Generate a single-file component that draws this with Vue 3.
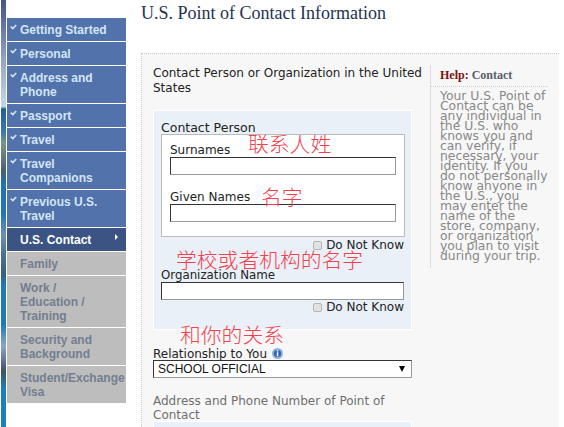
<template>
  <div class="page">
    <div class="strip"></div>
    <ul class="nav">
      <li
        v-for="item in navItems"
        :key="item.label"
        class="nav__item"
        :class="['nav__item--' + item.state]"
      >
        <svg v-if="item.state === 'done'" class="nav__check" width="7" height="6" viewBox="0 0 7 6">
          <path d="M.8 2.6 2.8 4.6 6.2 1" fill="none" stroke="#d6e6f5" stroke-width="1.6" />
        </svg>
        <svg v-if="item.state === 'active'" class="nav__arrow" width="3" height="6" viewBox="0 0 3 6">
          <path d="M0 0 3 3 0 6z" fill="#fff" />
        </svg>
        <span v-html="item.label"></span>
      </li>
    </ul>

    <main class="main">
      <h1 class="title">U.S. Point of Contact Information</h1>
      <div class="panel">
        <div class="form">
          <div class="form__heading">Contact Person or Organization in the United States</div>
          <div class="group">
            <div class="group__label">Contact Person</div>
            <div class="person">
              <label class="field-label">Surnames</label>
              <input class="text" type="text" />
              <label class="field-label field-label--given">Given Names</label>
              <input class="text" type="text" />
            </div>
            <div class="dnk"><input type="checkbox" class="check" /><span>Do Not Know</span></div>
            <label class="org-label">Organization Name</label>
            <input class="text text--org" type="text" />
            <div class="dnk dnk--org"><input type="checkbox" class="check" /><span>Do Not Know</span></div>
          </div>
          <div class="rel-label">
            <span>Relationship to You</span>
            <svg class="info" width="11" height="11" viewBox="0 0 11 11">
              <circle cx="5.5" cy="5.5" r="5.5" fill="#8fb0dc" />
              <circle cx="5.5" cy="5.5" r="3.6" fill="#2f62b4" />
              <rect x="4.8" y="2.2" width="1.5" height="1.4" fill="#fff" />
              <rect x="4.8" y="4.2" width="1.5" height="4.2" fill="#fff" />
            </svg>
          </div>
          <div class="select">
            <span>SCHOOL OFFICIAL</span>
            <i class="select__arrow"></i>
          </div>
          <div class="address">Address and Phone Number of Point of Contact</div>
          <div class="group group--tail"></div>
        </div>

        <aside class="help">
          <div class="help__title"><b>Help:</b> Contact</div>
          <p class="help__text">
            <span v-for="line in helpLines" :key="line" class="help__line">{{ line }}</span>
          </p>
        </aside>
      </div>
    </main>

    <span
      v-for="note in notes"
      :key="note.text"
      class="note"
      :style="{ left: note.x + 'px', top: note.y + 'px' }"
    >{{ note.text }}</span>
  </div>
</template>

<script setup>
const navItems = [
  { label: 'Getting Started', state: 'done' },
  { label: 'Personal', state: 'done' },
  { label: 'Address and<br>Phone', state: 'done' },
  { label: 'Passport', state: 'done' },
  { label: 'Travel', state: 'done' },
  { label: 'Travel<br>Companions', state: 'done' },
  { label: 'Previous U.S.<br>Travel', state: 'done' },
  { label: 'U.S. Contact', state: 'active' },
  { label: 'Family', state: 'todo' },
  { label: 'Work /<br>Education /<br>Training', state: 'todo' },
  { label: 'Security and<br>Background', state: 'todo' },
  { label: 'Student/Exchange<br>Visa', state: 'todo' }
]

const helpLines = [
  'Your U.S. Point of',
  'Contact can be',
  'any individual in',
  'the U.S. who',
  'knows you and',
  'can verify, if',
  'necessary, your',
  'identity. If you',
  'do not personally',
  'know anyone in',
  'the U.S., you',
  'may enter the',
  'name of the',
  'store, company,',
  'or organization',
  'you plan to visit',
  'during your trip.'
]

// handwritten annotations lying over the form
const notes = [
  { text: '联系人姓', x: 248, y: 130 },
  { text: '名字', x: 261, y: 183 },
  { text: '学校或者机构的名字', x: 176, y: 246 },
  { text: '和你的关系', x: 180, y: 321 }
]
</script>

<style>
html, body { margin: 0; background: #fff; }
</style>

<style scoped>
.page {
  position: relative;
  display: flex;
  width: 564px;
  height: 427px;
  overflow: hidden;
  background: #fff;
  font-family: "DejaVu Sans", Verdana, sans-serif;
}
.strip {
  flex: 0 0 5px;
  margin: 0 1px;
  background: linear-gradient(180deg, #47558f 0, #5f6f9f 5%, #93a5c0 14%, #c3d3e2 24%, #c3d3e2 25%, #1f5f96 25.5%, #3b7aa8 31%, #76997f 33.5%, #5d6f78 38%, #49606f 40%, #1f74b0 43%, #1d76b4 50%, #6f8fb0 55%, #49708f 60%, #3a5f78 64%, #1c7ab8 67%, #1c7ab8 76%, #8ea4c8 81%, #5a6c88 85%, #3e5366 87%, #1b7fbe 91%, #1b7fbe 100%);
}
.nav {
  flex: 0 0 119px;
  margin: 18px 0 0;
  padding: 0;
  list-style: none;
  align-self: flex-start;
}
.nav__item {
  position: relative;
  box-sizing: border-box;
  padding: 5px 0 4px 13px;
  border-bottom: 1px solid #fff;
  font: bold 12px/14px "Liberation Sans", Arial, sans-serif;
  white-space: nowrap;
}
.nav__item--done { background: #5172ab; color: #d3e5f6; }
.nav__item--active { background: #3c5484; color: #fff; }
.nav__item--todo { background: #bdbdbd; color: #737d90; }
.nav__check { position: absolute; left: 3px; top: 6px; }
.nav__arrow { position: absolute; left: 108px; top: 6px; }

.main { flex: 1; min-width: 0; padding: 0 5px 0 15px; }
.title {
  margin: 0;
  padding-top: 3px;
  height: 53px;
  box-sizing: border-box;
  font: normal 18px/20px "Liberation Serif", "Times New Roman", serif;
  color: #243252;
}
.panel {
  display: flex;
  height: 400px;
  padding: 11px 0 0 11px;
  border-top: 1px dotted #ccc;
  border-left: 1px dotted #ccc;
  background: #f7f7f7;
}
.form { flex: 0 0 259px; min-width: 0; font-size: 12px; line-height: 15px; color: #222; }
.form__heading { width: 270px; padding-top: 1px; line-height: 15px; }
.group {
  box-sizing: border-box;
  height: 220px;
  margin-top: 14px;
  padding: 10px 7px 0;
  background: #e9f0f7;
  border: 1px solid #fff;
}
.group--tail { height: 40px; margin-top: -1px; }
.group__label { font-size: 12.5px; line-height: 13px; }
.person {
  box-sizing: border-box;
  height: 103px;
  margin-right: -1px;
  padding: 9px 8px 0;
  background: #fff;
  border: 1px solid #bbb;
}
.field-label { display: block; margin-bottom: 1px; line-height: 12px; }
.field-label--given { margin-top: 16px; }
.text {
  display: block;
  box-sizing: border-box;
  width: 100%;
  height: 18px;
  margin: 0;
  padding: 0;
  background: #fff;
  border: 1px solid;
  border-color: #333 #999 #999 #333;
  border-radius: 0;
  outline: 0;
}
.text--org { margin-top: 1px; }
.dnk {
  display: flex;
  justify-content: flex-end;
  align-items: center;
  gap: 4px;
  height: 14px;
  margin-top: 1px;
}
.dnk--org { margin-top: 0; }
.check {
  appearance: none;
  box-sizing: border-box;
  width: 9px;
  height: 9px;
  margin: 0;
  background: #e2e2e2;
  border: 1px solid #b5b5b5;
  border-radius: 2px;
}
.org-label { display: block; margin-top: 17px; line-height: 12px; font-size: 11.8px; }
.rel-label {
  display: flex;
  align-items: center;
  gap: 5px;
  margin-top: 18px;
  line-height: 12px;
}
.info { flex: none; margin-top: -2px; }
.select {
  display: flex;
  align-items: center;
  justify-content: space-between;
  box-sizing: border-box;
  height: 18px;
  padding: 0 6px 0 4px;
  background: #fff;
  border: 1px solid;
  border-color: #333 #999 #999 #333;
  font: 12px/16px "Liberation Sans", Arial, sans-serif;
  color: #111;
}
.select__arrow {
  width: 0;
  height: 0;
  border: 3.5px solid transparent;
  border-top: 6px solid #000;
  border-bottom: 0;
}
.address { margin-top: 16px; line-height: 14px; color: #6f6f6f; }
.help {
  box-sizing: border-box;
  flex: 0 0 116px;
  height: 203px;
  margin-left: 18px;
  padding-top: 3px;
  border-left: 1px solid #ddd;
  color: #888;
}
.help__title {
  padding: 0 0 4px 9px;
  border-bottom: 1px dotted #ccc;
  font: bold 12px/14px "Liberation Serif", "Times New Roman", serif;
  color: #555f6e;
}
.help__title b { color: #7a1212; }
.help__text {
  margin: 4px 0 0;
  padding-left: 9px;
  font-size: 12.35px;
  line-height: 10px;
  white-space: nowrap;
}
.help__line { display: block; }
.note {
  position: absolute;
  font: 300 20.8px/26px "Noto Sans CJK SC", sans-serif;
  color: #f2404c;
  white-space: nowrap;
}
</style>
